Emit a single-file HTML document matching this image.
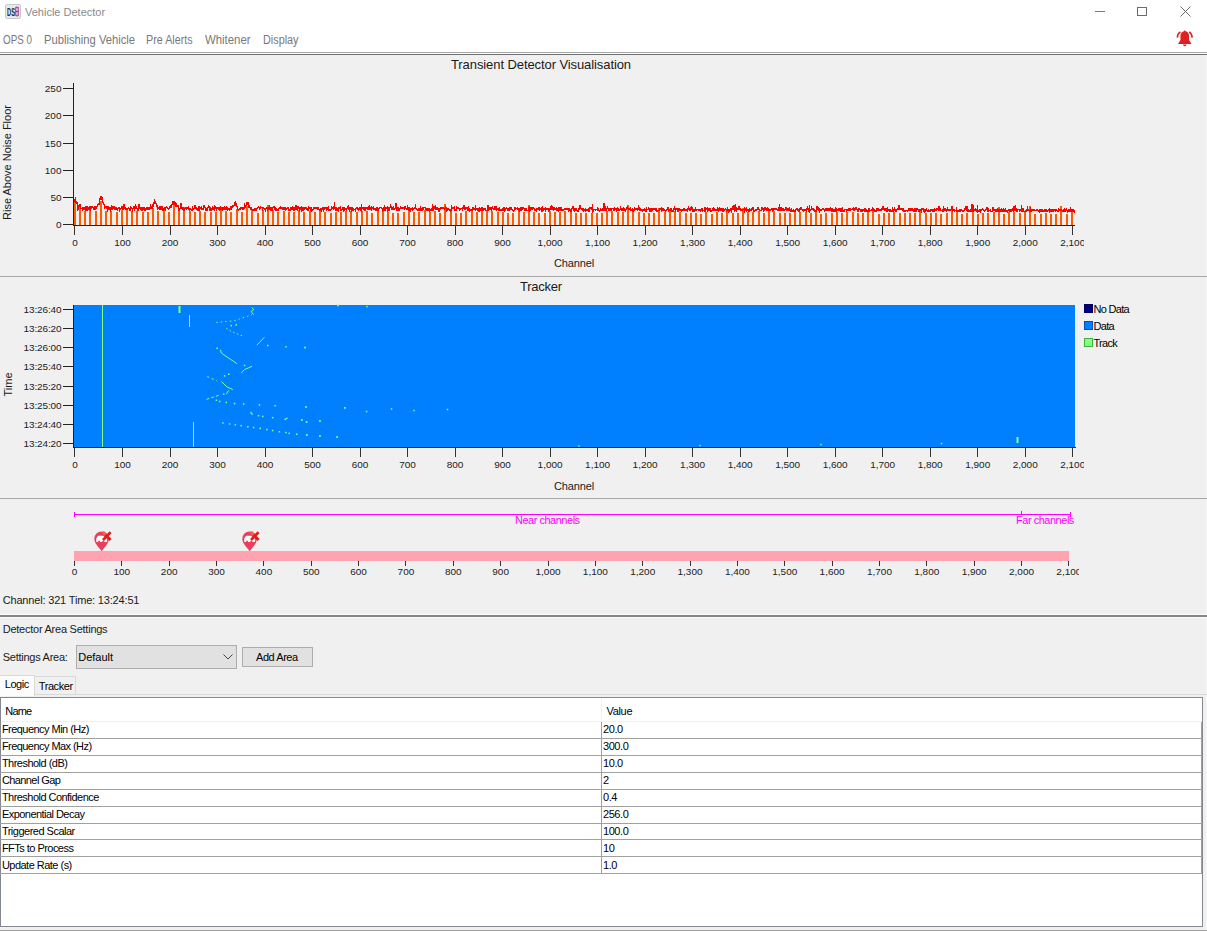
<!DOCTYPE html>
<html><head><meta charset="utf-8"><style>
html,body{margin:0;padding:0;width:1207px;height:931px;overflow:hidden;background:#f0f0f0;}
body{position:relative;font-family:"Liberation Sans",sans-serif;}
.t{position:absolute;white-space:nowrap;font-family:"Liberation Sans",sans-serif;}
</style></head><body>
<div style="position:absolute;left:0px;top:0px;width:1207px;height:55px;background:#fff;"></div>
<svg style="position:absolute;left:5px;top:4px" width="16" height="15" viewBox="0 0 16 15">
<rect x="0.5" y="0.5" width="15" height="14" rx="1.5" fill="#e8e8e8" stroke="#c8c8c8"/>
<text x="2" y="12" font-family="Liberation Sans" font-size="10" font-weight="bold" fill="#1a2a4a" textLength="8" lengthAdjust="spacingAndGlyphs">DS</text>
<path d="M10.8 3.2h2.4v8.6h-2.4zM10.8 7.5h2.4" fill="none" stroke="#a02090" stroke-width="1"/>
</svg>
<div class="t" style="left:25.00px;top:7px;font-size:11px;line-height:11px;color:#8a8a8a;">Vehicle Detector</div>
<div style="position:absolute;left:1095px;top:11px;width:10px;height:1px;background:#7a7a7a;"></div>
<div style="position:absolute;left:1137px;top:7px;width:10px;height:9px;background:transparent;border:1px solid #6a6a6a;box-sizing:border-box;"></div>
<svg style="position:absolute;left:1180px;top:6px" width="11" height="11"><path d="M0.5 0.5L10.5 10.5M10.5 0.5L0.5 10.5" stroke="#6a6a6a" stroke-width="1"/></svg>
<div class="t" style="left:3.10px;top:34px;font-size:12px;line-height:12px;color:#787878;transform:scaleX(0.818);transform-origin:0 0;">OPS 0</div>
<div class="t" style="left:43.70px;top:34px;font-size:12px;line-height:12px;color:#787878;transform:scaleX(0.935);transform-origin:0 0;">Publishing Vehicle</div>
<div class="t" style="left:146.40px;top:34px;font-size:12px;line-height:12px;color:#787878;transform:scaleX(0.896);transform-origin:0 0;">Pre Alerts</div>
<div class="t" style="left:205.40px;top:34px;font-size:12px;line-height:12px;color:#787878;transform:scaleX(0.948);transform-origin:0 0;">Whitener</div>
<div class="t" style="left:263.20px;top:34px;font-size:12px;line-height:12px;color:#787878;transform:scaleX(0.902);transform-origin:0 0;">Display</div>
<svg style="position:absolute;left:1176px;top:30px" width="18" height="18" viewBox="0 0 18 18">
<path d="M8.75 1.3c-2.6 0-4.3 2-4.3 4.8v3.8L2 13.9h13.5L13.05 9.9V6.1c0-2.8-1.7-4.8-4.3-4.8z" fill="#e02020"/>
<rect x="8" y="0.6" width="1.5" height="1.5" fill="#e02020"/>
<path d="M7 14.5a1.75 1.75 0 0 0 3.5 0z" fill="#e02020"/>
<path d="M4.4 1.9A6.5 6.5 0 0 0 1.5 7.6" stroke="#e02020" stroke-width="1.7" fill="none"/>
<path d="M13.1 1.9A6.5 6.5 0 0 1 16 7.6" stroke="#e02020" stroke-width="1.7" fill="none"/>
</svg>
<div style="position:absolute;left:0px;top:52px;width:1207px;height:1px;background:#a8a8a8;"></div>
<div style="position:absolute;left:0px;top:54px;width:1207px;height:1px;background:#707070;"></div>
<div style="position:absolute;left:0px;top:55px;width:1207px;height:876px;background:#f0f0f0;"></div>
<div style="position:absolute;left:1206px;top:55px;width:1px;height:876px;background:#f7f7f7;"></div>
<div class="t" style="left:451.00px;top:58px;font-size:13px;line-height:13px;color:#1a1a1a;letter-spacing:-0.088px;">Transient Detector Visualisation</div>
<div style="position:absolute;left:73px;top:83px;width:1px;height:143px;background:#222;"></div>
<div style="position:absolute;left:63px;top:224px;width:10px;height:1px;background:#222;"></div>
<div class="t" style="left:55.94px;top:221px;font-size:10px;line-height:10px;color:#222;transform:scaleY(0.85);transform-origin:50% 4px;">0</div>
<div style="position:absolute;left:63px;top:197px;width:10px;height:1px;background:#222;"></div>
<div class="t" style="left:50.38px;top:194px;font-size:10px;line-height:10px;color:#222;transform:scaleY(0.85);transform-origin:50% 4px;">50</div>
<div style="position:absolute;left:63px;top:170px;width:10px;height:1px;background:#222;"></div>
<div class="t" style="left:44.82px;top:167px;font-size:10px;line-height:10px;color:#222;transform:scaleY(0.85);transform-origin:50% 4px;">100</div>
<div style="position:absolute;left:63px;top:143px;width:10px;height:1px;background:#222;"></div>
<div class="t" style="left:44.82px;top:140px;font-size:10px;line-height:10px;color:#222;transform:scaleY(0.85);transform-origin:50% 4px;">150</div>
<div style="position:absolute;left:63px;top:115px;width:10px;height:1px;background:#222;"></div>
<div class="t" style="left:44.82px;top:112px;font-size:10px;line-height:10px;color:#222;transform:scaleY(0.85);transform-origin:50% 4px;">200</div>
<div style="position:absolute;left:63px;top:88px;width:10px;height:1px;background:#222;"></div>
<div class="t" style="left:44.82px;top:85px;font-size:10px;line-height:10px;color:#222;transform:scaleY(0.85);transform-origin:50% 4px;">250</div>
<div style="position:absolute;left:73px;top:225px;width:1002px;height:1px;background:#222;"></div>
<div style="position:absolute;left:0;top:0;width:1083.5px;height:931px;overflow:hidden">
<div style="position:absolute;left:74px;top:226px;width:1px;height:9px;background:#333;"></div>
<div class="t" style="left:72.22px;top:239px;font-size:10px;line-height:10px;color:#222;transform:scaleY(0.85);transform-origin:50% 4px;">0</div>
<div style="position:absolute;left:122px;top:226px;width:1px;height:9px;background:#333;"></div>
<div class="t" style="left:114.17px;top:239px;font-size:10px;line-height:10px;color:#222;transform:scaleY(0.85);transform-origin:50% 4px;">100</div>
<div style="position:absolute;left:170px;top:226px;width:1px;height:9px;background:#333;"></div>
<div class="t" style="left:161.68px;top:239px;font-size:10px;line-height:10px;color:#222;transform:scaleY(0.85);transform-origin:50% 4px;">200</div>
<div style="position:absolute;left:217px;top:226px;width:1px;height:9px;background:#333;"></div>
<div class="t" style="left:209.19px;top:239px;font-size:10px;line-height:10px;color:#222;transform:scaleY(0.85);transform-origin:50% 4px;">300</div>
<div style="position:absolute;left:265px;top:226px;width:1px;height:9px;background:#333;"></div>
<div class="t" style="left:256.70px;top:239px;font-size:10px;line-height:10px;color:#222;transform:scaleY(0.85);transform-origin:50% 4px;">400</div>
<div style="position:absolute;left:312px;top:226px;width:1px;height:9px;background:#333;"></div>
<div class="t" style="left:304.21px;top:239px;font-size:10px;line-height:10px;color:#222;transform:scaleY(0.85);transform-origin:50% 4px;">500</div>
<div style="position:absolute;left:360px;top:226px;width:1px;height:9px;background:#333;"></div>
<div class="t" style="left:351.72px;top:239px;font-size:10px;line-height:10px;color:#222;transform:scaleY(0.85);transform-origin:50% 4px;">600</div>
<div style="position:absolute;left:407px;top:226px;width:1px;height:9px;background:#333;"></div>
<div class="t" style="left:399.23px;top:239px;font-size:10px;line-height:10px;color:#222;transform:scaleY(0.85);transform-origin:50% 4px;">700</div>
<div style="position:absolute;left:455px;top:226px;width:1px;height:9px;background:#333;"></div>
<div class="t" style="left:446.74px;top:239px;font-size:10px;line-height:10px;color:#222;transform:scaleY(0.85);transform-origin:50% 4px;">800</div>
<div style="position:absolute;left:502px;top:226px;width:1px;height:9px;background:#333;"></div>
<div class="t" style="left:494.25px;top:239px;font-size:10px;line-height:10px;color:#222;transform:scaleY(0.85);transform-origin:50% 4px;">900</div>
<div style="position:absolute;left:550px;top:226px;width:1px;height:9px;background:#333;"></div>
<div class="t" style="left:537.59px;top:239px;font-size:10px;line-height:10px;color:#222;transform:scaleY(0.85);transform-origin:50% 4px;">1,000</div>
<div style="position:absolute;left:597px;top:226px;width:1px;height:9px;background:#333;"></div>
<div class="t" style="left:585.10px;top:239px;font-size:10px;line-height:10px;color:#222;transform:scaleY(0.85);transform-origin:50% 4px;">1,100</div>
<div style="position:absolute;left:645px;top:226px;width:1px;height:9px;background:#333;"></div>
<div class="t" style="left:632.61px;top:239px;font-size:10px;line-height:10px;color:#222;transform:scaleY(0.85);transform-origin:50% 4px;">1,200</div>
<div style="position:absolute;left:692px;top:226px;width:1px;height:9px;background:#333;"></div>
<div class="t" style="left:680.12px;top:239px;font-size:10px;line-height:10px;color:#222;transform:scaleY(0.85);transform-origin:50% 4px;">1,300</div>
<div style="position:absolute;left:740px;top:226px;width:1px;height:9px;background:#333;"></div>
<div class="t" style="left:727.63px;top:239px;font-size:10px;line-height:10px;color:#222;transform:scaleY(0.85);transform-origin:50% 4px;">1,400</div>
<div style="position:absolute;left:787px;top:226px;width:1px;height:9px;background:#333;"></div>
<div class="t" style="left:775.14px;top:239px;font-size:10px;line-height:10px;color:#222;transform:scaleY(0.85);transform-origin:50% 4px;">1,500</div>
<div style="position:absolute;left:835px;top:226px;width:1px;height:9px;background:#333;"></div>
<div class="t" style="left:822.65px;top:239px;font-size:10px;line-height:10px;color:#222;transform:scaleY(0.85);transform-origin:50% 4px;">1,600</div>
<div style="position:absolute;left:882px;top:226px;width:1px;height:9px;background:#333;"></div>
<div class="t" style="left:870.16px;top:239px;font-size:10px;line-height:10px;color:#222;transform:scaleY(0.85);transform-origin:50% 4px;">1,700</div>
<div style="position:absolute;left:930px;top:226px;width:1px;height:9px;background:#333;"></div>
<div class="t" style="left:917.67px;top:239px;font-size:10px;line-height:10px;color:#222;transform:scaleY(0.85);transform-origin:50% 4px;">1,800</div>
<div style="position:absolute;left:977px;top:226px;width:1px;height:9px;background:#333;"></div>
<div class="t" style="left:965.18px;top:239px;font-size:10px;line-height:10px;color:#222;transform:scaleY(0.85);transform-origin:50% 4px;">1,900</div>
<div style="position:absolute;left:1025px;top:226px;width:1px;height:9px;background:#333;"></div>
<div class="t" style="left:1012.69px;top:239px;font-size:10px;line-height:10px;color:#222;transform:scaleY(0.85);transform-origin:50% 4px;">2,000</div>
<div style="position:absolute;left:1072px;top:226px;width:1px;height:9px;background:#333;"></div>
<div class="t" style="left:1060.20px;top:239px;font-size:10px;line-height:10px;color:#222;transform:scaleY(0.85);transform-origin:50% 4px;">2,100</div>
</div>
<div class="t" style="left:554.00px;top:258px;font-size:11px;line-height:11px;color:#1a1a1a;letter-spacing:-0.139px;">Channel</div>
<div class="t" style="left:-53px;top:156.5px;width:120px;text-align:center;font-size:11px;line-height:11px;color:#1a1a1a;transform:rotate(-90deg);">Rise Above Noise Floor</div>
<svg style="position:absolute;left:0;top:0" width="1207" height="260"><path d="M75 224.5V201 M80 224.5V207 M85 224.5V211 M90 224.5V210 M96 224.5V211 M101 224.5V201 M106 224.5V211 M111 224.5V211 M117 224.5V212 M122 224.5V210 M127 224.5V210 M132 224.5V211 M137 224.5V211 M143 224.5V212 M148 224.5V212 M153 224.5V208 M158 224.5V211 M164 224.5V210 M169 224.5V212 M174 224.5V204 M179 224.5V211 M184 224.5V207 M190 224.5V211 M195 224.5V212 M200 224.5V211 M205 224.5V212 M211 224.5V212 M216 224.5V212 M221 224.5V210 M226 224.5V211 M231 224.5V212 M237 224.5V209 M242 224.5V212 M247 224.5V206 M252 224.5V210 M258 224.5V213 M263 224.5V210 M268 224.5V205 M273 224.5V210 M278 224.5V212 M284 224.5V211 M289 224.5V212 M294 224.5V212 M299 224.5V210 M304 224.5V212 M310 224.5V211 M315 224.5V212 M320 224.5V211 M325 224.5V212 M331 224.5V213 M336 224.5V212 M341 224.5V212 M346 224.5V211 M351 224.5V211 M357 224.5V212 M362 224.5V211 M367 224.5V211 M372 224.5V213 M378 224.5V211 M383 224.5V211 M388 224.5V212 M393 224.5V213 M398 224.5V213 M404 224.5V212 M409 224.5V211 M414 224.5V212 M419 224.5V212 M425 224.5V210 M430 224.5V212 M435 224.5V211 M440 224.5V213 M445 224.5V204 M451 224.5V211 M456 224.5V213 M461 224.5V213 M466 224.5V211 M472 224.5V211 M477 224.5V212 M482 224.5V211 M487 224.5V211 M492 224.5V211 M498 224.5V212 M503 224.5V212 M508 224.5V213 M513 224.5V213 M519 224.5V211 M524 224.5V212 M529 224.5V205 M534 224.5V212 M539 224.5V213 M545 224.5V213 M550 224.5V211 M555 224.5V212 M560 224.5V212 M565 224.5V211 M571 224.5V211 M576 224.5V213 M581 224.5V213 M586 224.5V213 M592 224.5V213 M597 224.5V213 M602 224.5V213 M607 224.5V211 M612 224.5V211 M618 224.5V212 M623 224.5V212 M628 224.5V205 M633 224.5V212 M639 224.5V212 M644 224.5V213 M649 224.5V213 M654 224.5V213 M659 224.5V208 M665 224.5V212 M670 224.5V211 M675 224.5V211 M680 224.5V212 M686 224.5V213 M691 224.5V213 M696 224.5V213 M701 224.5V214 M706 224.5V212 M712 224.5V214 M717 224.5V212 M722 224.5V213 M727 224.5V211 M733 224.5V213 M738 224.5V213 M743 224.5V208 M748 224.5V212 M753 224.5V212 M759 224.5V211 M764 224.5V213 M769 224.5V211 M774 224.5V211 M780 224.5V213 M785 224.5V213 M790 224.5V213 M795 224.5V211 M800 224.5V212 M806 224.5V212 M811 224.5V213 M816 224.5V212 M821 224.5V214 M826 224.5V213 M832 224.5V213 M837 224.5V212 M842 224.5V213 M847 224.5V212 M853 224.5V212 M858 224.5V213 M863 224.5V213 M868 224.5V212 M873 224.5V208 M879 224.5V214 M884 224.5V213 M889 224.5V213 M894 224.5V212 M900 224.5V213 M905 224.5V213 M910 224.5V213 M915 224.5V213 M920 224.5V209 M926 224.5V213 M931 224.5V213 M936 224.5V213 M941 224.5V214 M947 224.5V213 M952 224.5V208 M957 224.5V212 M962 224.5V214 M967 224.5V213 M973 224.5V212 M978 224.5V214 M983 224.5V213 M988 224.5V213 M994 224.5V212 M999 224.5V207 M1004 224.5V214 M1009 224.5V212 M1014 224.5V212 M1020 224.5V213 M1025 224.5V212 M1030 224.5V206 M1035 224.5V214 M1041 224.5V214 M1046 224.5V213 M1051 224.5V214 M1056 224.5V214 M1061 224.5V206 M1067 224.5V214 M1072 224.5V212" stroke="#ff5a00" stroke-width="2" fill="none" shape-rendering="crispEdges"/><polyline points="74.0,201.1 74.5,201.5 75.0,199.3 75.5,198.6 76.0,201.8 76.5,201.6 77.0,203.4 77.5,202.2 78.0,209.2 78.5,208.4 79.0,206.2 79.5,206.5 80.0,203.9 80.5,208.1 81.0,208.4 81.5,208.3 82.0,208.1 82.5,210.3 83.0,209.7 83.5,207.6 84.0,207.5 84.5,209.4 85.0,209.7 85.5,210.2 86.0,206.3 86.5,210.0 87.0,210.2 87.5,206.6 88.0,209.4 88.5,206.7 89.0,210.2 89.5,206.8 90.0,206.7 90.5,209.5 91.0,208.6 91.5,207.1 92.0,206.9 92.5,206.8 93.0,207.2 93.5,210.2 94.0,207.6 94.5,207.2 95.0,209.7 95.5,206.7 96.0,207.0 96.5,209.0 97.0,206.7 97.5,205.2 98.0,204.7 98.5,203.8 99.0,204.4 99.5,201.0 100.0,197.7 100.5,199.4 101.0,196.4 101.5,198.7 102.0,197.8 102.5,202.2 103.0,202.3 103.5,202.5 104.0,204.7 104.5,205.9 105.0,207.9 105.5,206.7 106.0,206.5 106.5,208.5 107.0,208.8 107.5,210.0 108.0,206.5 108.5,208.2 109.0,207.1 109.5,208.7 110.0,207.8 110.5,210.3 111.0,209.1 111.5,204.9 112.0,210.0 112.5,206.3 113.0,208.3 113.5,207.7 114.0,206.7 114.5,209.3 115.0,209.3 115.5,209.5 116.0,207.8 116.5,210.0 117.0,208.1 117.5,209.8 118.0,208.9 118.5,208.7 119.0,206.7 119.5,210.3 120.0,209.3 120.5,209.3 121.0,208.2 121.5,206.8 122.0,206.6 122.5,208.3 123.0,209.2 123.5,208.9 124.0,204.5 124.5,209.1 125.0,207.1 125.5,209.0 126.0,210.0 126.5,209.1 127.0,208.1 127.5,210.0 128.0,208.0 128.5,207.7 129.0,208.4 129.5,209.8 130.0,210.2 130.5,207.1 131.0,207.5 131.5,208.1 132.0,208.4 132.5,209.8 133.0,208.2 133.5,206.6 134.0,206.6 134.5,208.7 135.0,207.2 135.5,203.8 136.0,207.4 136.5,206.7 137.0,208.2 137.5,209.0 138.0,210.2 138.5,207.3 139.0,203.8 139.5,209.3 140.0,207.6 140.5,209.2 141.0,208.9 141.5,208.0 142.0,210.0 142.5,210.1 143.0,207.0 143.5,208.9 144.0,208.0 144.5,209.9 145.0,210.2 145.5,209.0 146.0,209.3 146.5,209.0 147.0,207.3 147.5,210.3 148.0,208.6 148.5,207.8 149.0,209.9 149.5,206.8 150.0,208.7 150.5,203.9 151.0,206.6 151.5,206.9 152.0,208.9 152.5,205.6 153.0,206.8 153.5,205.2 154.0,203.0 154.5,200.3 155.0,201.6 155.5,202.8 156.0,203.1 156.5,204.7 157.0,205.4 157.5,208.6 158.0,209.1 158.5,208.3 159.0,207.2 159.5,208.5 160.0,206.6 160.5,208.5 161.0,209.7 161.5,208.5 162.0,206.8 162.5,208.2 163.0,210.1 163.5,208.4 164.0,208.2 164.5,210.1 165.0,207.8 165.5,209.0 166.0,207.1 166.5,206.6 167.0,207.4 167.5,207.8 168.0,209.0 168.5,209.3 169.0,208.4 169.5,207.1 170.0,207.7 170.5,207.2 171.0,205.5 171.5,206.4 172.0,204.9 172.5,204.1 173.0,201.5 173.5,203.0 174.0,200.8 174.5,203.4 175.0,204.5 175.5,202.2 176.0,205.7 176.5,204.4 177.0,206.6 177.5,206.1 178.0,206.1 178.5,209.0 179.0,210.2 179.5,208.5 180.0,208.5 180.5,207.3 181.0,203.4 181.5,208.6 182.0,207.2 182.5,207.4 183.0,210.4 183.5,207.0 184.0,210.3 184.5,209.6 185.0,208.4 185.5,208.3 186.0,206.7 186.5,209.9 187.0,208.4 187.5,208.2 188.0,207.3 188.5,206.7 189.0,209.7 189.5,209.9 190.0,208.2 190.5,208.6 191.0,209.7 191.5,210.1 192.0,209.6 192.5,208.2 193.0,210.0 193.5,209.6 194.0,208.2 194.5,206.9 195.0,205.4 195.5,209.1 196.0,207.5 196.5,209.2 197.0,209.2 197.5,208.7 198.0,210.5 198.5,209.3 199.0,206.6 199.5,209.5 200.0,208.2 200.5,207.4 201.0,207.0 201.5,210.1 202.0,208.6 202.5,208.8 203.0,209.1 203.5,207.0 204.0,204.8 204.5,207.3 205.0,207.3 205.5,209.0 206.0,210.3 206.5,208.7 207.0,208.1 207.5,209.2 208.0,207.8 208.5,205.1 209.0,206.8 209.5,209.6 210.0,210.1 210.5,206.9 211.0,210.3 211.5,210.2 212.0,208.5 212.5,207.6 213.0,210.3 213.5,208.5 214.0,209.8 214.5,207.1 215.0,208.4 215.5,206.9 216.0,207.2 216.5,209.3 217.0,207.7 217.5,208.3 218.0,208.7 218.5,210.3 219.0,207.6 219.5,210.1 220.0,209.1 220.5,207.7 221.0,208.9 221.5,209.1 222.0,207.4 222.5,210.5 223.0,207.9 223.5,207.8 224.0,209.1 224.5,208.8 225.0,207.1 225.5,208.8 226.0,208.1 226.5,207.5 227.0,209.6 227.5,207.0 228.0,209.8 228.5,209.7 229.0,208.4 229.5,209.8 230.0,209.2 230.5,207.9 231.0,209.5 231.5,208.1 232.0,206.6 232.5,206.0 233.0,207.1 233.5,206.5 234.0,205.8 234.5,202.9 235.0,202.1 235.5,204.8 236.0,203.9 236.5,205.3 237.0,206.3 237.5,208.4 238.0,209.7 238.5,210.0 239.0,209.7 239.5,207.9 240.0,210.3 240.5,207.7 241.0,208.1 241.5,208.2 242.0,207.4 242.5,209.6 243.0,209.6 243.5,206.7 244.0,208.9 244.5,205.0 245.0,206.2 245.5,207.0 246.0,205.6 246.5,204.1 247.0,202.1 247.5,204.8 248.0,202.8 248.5,203.8 249.0,206.6 249.5,205.8 250.0,207.6 250.5,207.6 251.0,210.1 251.5,208.5 252.0,209.4 252.5,210.2 253.0,209.9 253.5,210.0 254.0,210.0 254.5,210.4 255.0,208.8 255.5,209.8 256.0,208.4 256.5,209.6 257.0,208.2 257.5,207.6 258.0,207.9 258.5,207.0 259.0,207.3 259.5,209.8 260.0,207.1 260.5,209.0 261.0,207.0 261.5,207.5 262.0,207.7 262.5,209.1 263.0,207.5 263.5,207.5 264.0,208.0 264.5,209.9 265.0,207.8 265.5,210.3 266.0,208.9 266.5,208.7 267.0,207.0 267.5,209.9 268.0,208.8 268.5,207.9 269.0,209.3 269.5,206.9 270.0,208.2 270.5,209.5 271.0,207.4 271.5,208.1 272.0,210.1 272.5,209.3 273.0,207.9 273.5,207.4 274.0,206.9 274.5,210.0 275.0,207.2 275.5,209.6 276.0,208.7 276.5,210.5 277.0,210.1 277.5,209.8 278.0,210.3 278.5,210.0 279.0,208.9 279.5,207.5 280.0,208.0 280.5,207.2 281.0,208.6 281.5,208.2 282.0,207.3 282.5,208.6 283.0,210.0 283.5,206.9 284.0,209.5 284.5,209.0 285.0,206.9 285.5,209.9 286.0,209.2 286.5,208.3 287.0,208.0 287.5,208.4 288.0,207.9 288.5,209.6 289.0,210.4 289.5,209.6 290.0,210.0 290.5,207.4 291.0,209.4 291.5,207.6 292.0,210.0 292.5,207.2 293.0,207.5 293.5,208.4 294.0,210.4 294.5,208.8 295.0,209.8 295.5,208.4 296.0,205.3 296.5,209.5 297.0,209.9 297.5,206.2 298.0,208.2 298.5,207.3 299.0,208.8 299.5,210.0 300.0,207.5 300.5,210.3 301.0,208.2 301.5,207.5 302.0,210.6 302.5,209.6 303.0,207.7 303.5,209.3 304.0,207.3 304.5,209.1 305.0,208.2 305.5,208.3 306.0,207.4 306.5,207.5 307.0,209.0 307.5,209.0 308.0,210.3 308.5,210.0 309.0,207.4 309.5,208.0 310.0,207.9 310.5,210.0 311.0,209.0 311.5,207.1 312.0,210.6 312.5,209.4 313.0,209.5 313.5,208.4 314.0,207.4 314.5,208.7 315.0,208.4 315.5,207.6 316.0,208.0 316.5,208.2 317.0,207.1 317.5,207.5 318.0,209.2 318.5,208.5 319.0,209.5 319.5,209.8 320.0,210.7 320.5,210.2 321.0,208.6 321.5,210.3 322.0,208.9 322.5,210.3 323.0,207.2 323.5,210.3 324.0,209.2 324.5,208.1 325.0,207.3 325.5,208.7 326.0,208.5 326.5,209.6 327.0,207.9 327.5,208.5 328.0,207.3 328.5,210.6 329.0,210.2 329.5,210.0 330.0,209.8 330.5,210.4 331.0,209.9 331.5,209.0 332.0,207.0 332.5,208.1 333.0,207.3 333.5,210.0 334.0,208.3 334.5,202.5 335.0,208.2 335.5,210.5 336.0,208.8 336.5,208.1 337.0,210.3 337.5,210.1 338.0,208.8 338.5,210.3 339.0,207.8 339.5,207.7 340.0,207.2 340.5,209.7 341.0,210.4 341.5,209.7 342.0,209.6 342.5,208.7 343.0,207.9 343.5,209.7 344.0,207.7 344.5,209.5 345.0,208.4 345.5,210.3 346.0,207.9 346.5,210.5 347.0,208.1 347.5,207.4 348.0,208.7 348.5,205.2 349.0,208.1 349.5,210.0 350.0,208.1 350.5,208.0 351.0,209.1 351.5,210.4 352.0,207.2 352.5,209.8 353.0,210.5 353.5,207.7 354.0,209.4 354.5,209.5 355.0,209.0 355.5,210.2 356.0,209.0 356.5,207.7 357.0,207.7 357.5,208.0 358.0,209.9 358.5,210.0 359.0,208.9 359.5,209.2 360.0,207.2 360.5,209.7 361.0,210.3 361.5,204.2 362.0,208.7 362.5,208.1 363.0,207.4 363.5,209.2 364.0,210.0 364.5,207.6 365.0,207.3 365.5,209.4 366.0,208.1 366.5,207.4 367.0,207.7 367.5,207.7 368.0,210.2 368.5,207.3 369.0,208.5 369.5,207.2 370.0,209.9 370.5,207.7 371.0,207.1 371.5,210.4 372.0,208.6 372.5,208.7 373.0,207.3 373.5,209.9 374.0,208.0 374.5,209.1 375.0,208.8 375.5,208.5 376.0,210.7 376.5,207.3 377.0,209.5 377.5,208.4 378.0,210.3 378.5,210.4 379.0,208.6 379.5,208.5 380.0,207.9 380.5,207.8 381.0,207.8 381.5,207.9 382.0,208.3 382.5,210.8 383.0,210.3 383.5,208.6 384.0,209.7 384.5,205.6 385.0,208.1 385.5,210.5 386.0,208.1 386.5,207.7 387.0,208.5 387.5,209.8 388.0,207.3 388.5,208.6 389.0,210.4 389.5,210.0 390.0,207.4 390.5,205.6 391.0,206.4 391.5,208.7 392.0,207.7 392.5,208.1 393.0,209.6 393.5,207.9 394.0,209.8 394.5,208.6 395.0,208.0 395.5,208.4 396.0,203.5 396.5,209.2 397.0,210.7 397.5,209.6 398.0,208.0 398.5,209.6 399.0,210.3 399.5,209.5 400.0,208.8 400.5,207.4 401.0,208.4 401.5,208.2 402.0,208.7 402.5,207.8 403.0,208.1 403.5,208.5 404.0,207.8 404.5,209.8 405.0,206.6 405.5,208.5 406.0,208.7 406.5,209.0 407.0,208.9 407.5,205.1 408.0,210.4 408.5,208.2 409.0,207.9 409.5,209.5 410.0,208.5 410.5,210.6 411.0,209.5 411.5,208.7 412.0,208.2 412.5,210.4 413.0,208.1 413.5,209.1 414.0,208.5 414.5,207.8 415.0,208.1 415.5,204.5 416.0,208.7 416.5,209.0 417.0,209.2 417.5,209.3 418.0,210.7 418.5,208.5 419.0,208.4 419.5,209.8 420.0,210.7 420.5,207.8 421.0,209.0 421.5,208.6 422.0,210.0 422.5,208.1 423.0,208.4 423.5,209.1 424.0,207.5 424.5,207.6 425.0,207.7 425.5,210.0 426.0,207.9 426.5,210.4 427.0,208.2 427.5,210.1 428.0,209.9 428.5,209.9 429.0,208.5 429.5,210.3 430.0,209.3 430.5,209.8 431.0,210.3 431.5,207.7 432.0,209.7 432.5,204.2 433.0,210.7 433.5,207.8 434.0,208.8 434.5,208.7 435.0,206.7 435.5,204.9 436.0,209.9 436.5,207.7 437.0,207.4 437.5,209.0 438.0,208.4 438.5,210.3 439.0,208.7 439.5,210.0 440.0,208.7 440.5,209.3 441.0,207.8 441.5,207.7 442.0,208.2 442.5,207.8 443.0,207.4 443.5,207.8 444.0,208.3 444.5,209.1 445.0,208.3 445.5,207.6 446.0,208.4 446.5,208.0 447.0,210.9 447.5,210.4 448.0,208.8 448.5,208.8 449.0,209.3 449.5,209.6 450.0,210.7 450.5,210.9 451.0,210.3 451.5,205.5 452.0,207.8 452.5,208.6 453.0,208.5 453.5,207.4 454.0,207.2 454.5,210.2 455.0,210.0 455.5,210.2 456.0,210.1 456.5,207.7 457.0,208.8 457.5,208.3 458.0,207.5 458.5,208.2 459.0,208.7 459.5,210.2 460.0,209.6 460.5,208.4 461.0,208.5 461.5,208.6 462.0,208.1 462.5,209.3 463.0,208.0 463.5,207.9 464.0,205.4 464.5,208.8 465.0,209.3 465.5,208.1 466.0,208.5 466.5,207.8 467.0,208.9 467.5,208.2 468.0,209.9 468.5,208.4 469.0,210.7 469.5,208.1 470.0,210.9 470.5,209.6 471.0,209.7 471.5,209.6 472.0,210.4 472.5,209.2 473.0,207.8 473.5,209.8 474.0,209.8 474.5,208.8 475.0,209.5 475.5,205.4 476.0,209.0 476.5,209.5 477.0,208.0 477.5,210.9 478.0,208.5 478.5,210.9 479.0,210.5 479.5,210.9 480.0,208.3 480.5,209.7 481.0,210.4 481.5,209.2 482.0,207.7 482.5,209.9 483.0,210.3 483.5,209.3 484.0,208.1 484.5,209.7 485.0,209.4 485.5,209.2 486.0,210.3 486.5,210.2 487.0,210.6 487.5,208.0 488.0,204.8 488.5,210.5 489.0,207.9 489.5,208.8 490.0,209.6 490.5,207.7 491.0,208.2 491.5,210.5 492.0,208.2 492.5,206.0 493.0,208.6 493.5,208.4 494.0,209.9 494.5,207.9 495.0,209.1 495.5,207.9 496.0,209.6 496.5,208.2 497.0,209.9 497.5,208.7 498.0,208.9 498.5,209.7 499.0,210.4 499.5,209.1 500.0,210.8 500.5,209.9 501.0,209.5 501.5,210.5 502.0,210.5 502.5,209.1 503.0,208.9 503.5,209.6 504.0,207.7 504.5,208.5 505.0,210.8 505.5,209.9 506.0,208.4 506.5,208.0 507.0,208.4 507.5,208.7 508.0,210.5 508.5,209.4 509.0,210.6 509.5,208.8 510.0,210.0 510.5,208.7 511.0,206.9 511.5,209.2 512.0,209.1 512.5,209.9 513.0,210.9 513.5,211.0 514.0,210.4 514.5,210.0 515.0,207.8 515.5,208.9 516.0,208.3 516.5,208.3 517.0,208.0 517.5,210.1 518.0,208.1 518.5,209.7 519.0,208.4 519.5,210.1 520.0,208.0 520.5,207.6 521.0,210.8 521.5,207.6 522.0,209.4 522.5,207.9 523.0,208.6 523.5,208.0 524.0,208.0 524.5,209.3 525.0,210.3 525.5,209.0 526.0,208.3 526.5,209.5 527.0,210.5 527.5,210.5 528.0,210.9 528.5,209.0 529.0,210.6 529.5,206.5 530.0,210.4 530.5,210.0 531.0,207.1 531.5,208.6 532.0,209.8 532.5,207.7 533.0,207.9 533.5,208.0 534.0,208.7 534.5,209.8 535.0,210.9 535.5,209.3 536.0,209.0 536.5,210.1 537.0,208.9 537.5,209.2 538.0,209.1 538.5,207.8 539.0,207.8 539.5,209.5 540.0,208.4 540.5,208.9 541.0,209.3 541.5,210.2 542.0,207.6 542.5,207.2 543.0,210.9 543.5,209.7 544.0,208.6 544.5,209.6 545.0,209.3 545.5,210.2 546.0,207.9 546.5,208.5 547.0,209.1 547.5,209.0 548.0,210.0 548.5,211.0 549.0,208.8 549.5,210.4 550.0,209.8 550.5,206.4 551.0,209.5 551.5,205.0 552.0,210.2 552.5,207.7 553.0,209.1 553.5,211.0 554.0,207.9 554.5,209.2 555.0,208.9 555.5,209.1 556.0,208.7 556.5,207.9 557.0,210.5 557.5,209.5 558.0,208.1 558.5,210.9 559.0,210.8 559.5,209.1 560.0,210.5 560.5,210.6 561.0,207.8 561.5,209.0 562.0,210.8 562.5,210.0 563.0,210.3 563.5,210.2 564.0,209.7 564.5,208.9 565.0,208.9 565.5,209.4 566.0,209.6 566.5,208.9 567.0,209.3 567.5,208.8 568.0,208.5 568.5,210.2 569.0,208.6 569.5,210.5 570.0,210.1 570.5,209.8 571.0,211.0 571.5,209.2 572.0,208.5 572.5,208.0 573.0,206.5 573.5,209.6 574.0,208.8 574.5,210.9 575.0,210.4 575.5,210.4 576.0,208.4 576.5,209.8 577.0,210.3 577.5,210.8 578.0,210.1 578.5,210.9 579.0,208.7 579.5,210.2 580.0,204.9 580.5,208.6 581.0,208.6 581.5,209.4 582.0,208.7 582.5,209.4 583.0,208.3 583.5,210.6 584.0,209.6 584.5,209.5 585.0,210.8 585.5,208.6 586.0,210.9 586.5,210.4 587.0,209.3 587.5,210.2 588.0,209.4 588.5,208.9 589.0,211.0 589.5,210.9 590.0,208.0 590.5,208.1 591.0,208.2 591.5,208.8 592.0,208.0 592.5,204.3 593.0,211.1 593.5,210.6 594.0,209.5 594.5,209.5 595.0,209.5 595.5,209.4 596.0,210.1 596.5,209.4 597.0,209.4 597.5,211.0 598.0,208.2 598.5,208.9 599.0,210.9 599.5,211.0 600.0,210.7 600.5,207.8 601.0,209.8 601.5,209.8 602.0,210.9 602.5,209.5 603.0,207.9 603.5,210.7 604.0,203.4 604.5,210.1 605.0,209.7 605.5,208.3 606.0,210.5 606.5,210.6 607.0,208.9 607.5,207.8 608.0,208.7 608.5,209.6 609.0,210.1 609.5,208.6 610.0,208.4 610.5,208.7 611.0,210.4 611.5,208.6 612.0,208.7 612.5,208.7 613.0,208.4 613.5,208.8 614.0,210.2 614.5,210.5 615.0,208.1 615.5,208.6 616.0,209.2 616.5,209.1 617.0,210.9 617.5,209.1 618.0,210.5 618.5,209.0 619.0,209.1 619.5,209.8 620.0,209.4 620.5,207.9 621.0,209.1 621.5,210.9 622.0,208.5 622.5,211.0 623.0,209.0 623.5,208.3 624.0,211.0 624.5,208.3 625.0,210.8 625.5,211.0 626.0,209.1 626.5,208.8 627.0,208.1 627.5,206.1 628.0,208.5 628.5,209.6 629.0,209.7 629.5,209.6 630.0,208.1 630.5,208.1 631.0,210.4 631.5,209.5 632.0,209.0 632.5,208.8 633.0,211.1 633.5,209.9 634.0,209.4 634.5,211.0 635.0,208.0 635.5,209.2 636.0,208.4 636.5,210.3 637.0,207.9 637.5,210.5 638.0,210.0 638.5,205.6 639.0,208.0 639.5,209.9 640.0,209.5 640.5,208.9 641.0,210.8 641.5,209.3 642.0,209.4 642.5,210.9 643.0,211.0 643.5,210.8 644.0,209.6 644.5,208.9 645.0,210.3 645.5,209.8 646.0,211.0 646.5,208.2 647.0,209.1 647.5,209.6 648.0,209.6 648.5,207.9 649.0,208.8 649.5,210.0 650.0,208.2 650.5,209.5 651.0,211.1 651.5,209.4 652.0,210.6 652.5,210.7 653.0,208.8 653.5,209.6 654.0,209.8 654.5,209.5 655.0,208.9 655.5,209.6 656.0,208.6 656.5,210.7 657.0,211.2 657.5,210.2 658.0,210.3 658.5,210.6 659.0,210.6 659.5,208.7 660.0,208.0 660.5,209.1 661.0,210.0 661.5,211.0 662.0,208.2 662.5,208.3 663.0,210.8 663.5,208.6 664.0,210.4 664.5,210.0 665.0,210.3 665.5,210.8 666.0,210.5 666.5,209.8 667.0,210.1 667.5,209.2 668.0,208.0 668.5,210.6 669.0,210.1 669.5,210.2 670.0,209.0 670.5,208.6 671.0,210.2 671.5,209.1 672.0,211.0 672.5,211.1 673.0,211.1 673.5,209.1 674.0,209.7 674.5,208.1 675.0,209.7 675.5,210.4 676.0,208.6 676.5,208.8 677.0,208.2 677.5,209.2 678.0,211.1 678.5,209.3 679.0,208.8 679.5,211.1 680.0,209.4 680.5,210.5 681.0,210.1 681.5,211.0 682.0,209.8 682.5,209.7 683.0,210.5 683.5,208.5 684.0,208.9 684.5,210.4 685.0,210.5 685.5,210.3 686.0,209.4 686.5,209.6 687.0,210.9 687.5,208.2 688.0,210.3 688.5,208.4 689.0,209.9 689.5,209.3 690.0,210.2 690.5,208.2 691.0,208.4 691.5,207.4 692.0,209.3 692.5,208.4 693.0,210.8 693.5,209.9 694.0,211.2 694.5,209.0 695.0,210.9 695.5,209.4 696.0,210.9 696.5,210.6 697.0,209.5 697.5,209.5 698.0,209.1 698.5,209.4 699.0,210.6 699.5,209.6 700.0,209.5 700.5,211.0 701.0,210.6 701.5,210.2 702.0,209.0 702.5,211.1 703.0,210.2 703.5,210.2 704.0,210.6 704.5,211.2 705.0,207.1 705.5,210.6 706.0,210.1 706.5,209.4 707.0,208.7 707.5,208.3 708.0,210.7 708.5,209.3 709.0,210.4 709.5,210.5 710.0,208.9 710.5,209.9 711.0,211.3 711.5,210.6 712.0,210.4 712.5,209.0 713.0,209.8 713.5,208.6 714.0,211.0 714.5,209.0 715.0,209.5 715.5,210.1 716.0,209.8 716.5,209.9 717.0,209.2 717.5,208.3 718.0,210.3 718.5,210.8 719.0,209.0 719.5,206.7 720.0,210.2 720.5,209.1 721.0,211.1 721.5,208.7 722.0,208.4 722.5,210.5 723.0,209.7 723.5,208.2 724.0,210.9 724.5,210.4 725.0,209.2 725.5,208.8 726.0,209.1 726.5,210.7 727.0,210.1 727.5,208.8 728.0,210.1 728.5,211.2 729.0,209.5 729.5,210.8 730.0,210.3 730.5,209.3 731.0,208.8 731.5,210.9 732.0,209.3 732.5,206.4 733.0,208.3 733.5,209.9 734.0,205.4 734.5,211.3 735.0,210.9 735.5,204.4 736.0,208.7 736.5,210.3 737.0,209.2 737.5,209.1 738.0,209.3 738.5,209.0 739.0,206.1 739.5,210.1 740.0,208.5 740.5,209.7 741.0,209.2 741.5,210.6 742.0,210.3 742.5,209.8 743.0,209.4 743.5,209.7 744.0,209.9 744.5,211.0 745.0,208.2 745.5,208.3 746.0,210.2 746.5,208.8 747.0,210.9 747.5,210.4 748.0,209.6 748.5,210.0 749.0,211.4 749.5,210.9 750.0,209.0 750.5,209.9 751.0,209.2 751.5,209.8 752.0,208.4 752.5,208.2 753.0,209.4 753.5,208.6 754.0,211.2 754.5,210.6 755.0,210.1 755.5,209.7 756.0,210.4 756.5,209.6 757.0,209.3 757.5,207.6 758.0,210.3 758.5,208.4 759.0,209.3 759.5,210.0 760.0,210.2 760.5,210.8 761.0,210.6 761.5,208.3 762.0,208.7 762.5,208.3 763.0,209.7 763.5,209.2 764.0,210.9 764.5,210.2 765.0,207.5 765.5,209.4 766.0,209.0 766.5,208.8 767.0,211.3 767.5,209.1 768.0,210.4 768.5,208.8 769.0,209.2 769.5,210.5 770.0,210.4 770.5,209.5 771.0,209.8 771.5,209.8 772.0,207.8 772.5,211.4 773.0,209.3 773.5,210.1 774.0,208.8 774.5,209.8 775.0,210.0 775.5,208.9 776.0,208.5 776.5,208.4 777.0,209.7 777.5,210.2 778.0,210.7 778.5,208.4 779.0,208.7 779.5,203.8 780.0,209.5 780.5,208.4 781.0,210.2 781.5,208.4 782.0,209.2 782.5,208.6 783.0,210.3 783.5,208.8 784.0,209.5 784.5,210.1 785.0,209.5 785.5,208.4 786.0,208.9 786.5,208.3 787.0,210.1 787.5,210.0 788.0,208.7 788.5,210.5 789.0,210.5 789.5,208.4 790.0,209.2 790.5,210.8 791.0,211.2 791.5,209.5 792.0,210.7 792.5,211.4 793.0,211.0 793.5,210.2 794.0,211.1 794.5,211.1 795.0,210.9 795.5,211.3 796.0,209.6 796.5,208.7 797.0,208.5 797.5,209.2 798.0,210.2 798.5,209.7 799.0,211.4 799.5,209.5 800.0,208.9 800.5,209.0 801.0,207.4 801.5,208.3 802.0,209.2 802.5,210.3 803.0,210.6 803.5,209.8 804.0,211.0 804.5,209.7 805.0,209.6 805.5,210.7 806.0,210.5 806.5,210.8 807.0,209.0 807.5,205.6 808.0,208.9 808.5,210.1 809.0,211.4 809.5,205.3 810.0,210.9 810.5,210.1 811.0,209.5 811.5,207.7 812.0,208.5 812.5,208.6 813.0,208.8 813.5,210.9 814.0,208.7 814.5,210.6 815.0,210.1 815.5,211.1 816.0,211.4 816.5,210.8 817.0,206.4 817.5,209.2 818.0,210.0 818.5,208.6 819.0,210.3 819.5,211.5 820.0,209.3 820.5,210.0 821.0,209.6 821.5,209.9 822.0,209.9 822.5,208.3 823.0,208.6 823.5,208.9 824.0,209.7 824.5,210.8 825.0,209.3 825.5,211.2 826.0,208.4 826.5,209.9 827.0,208.8 827.5,210.7 828.0,210.5 828.5,209.8 829.0,208.6 829.5,209.5 830.0,210.8 830.5,208.5 831.0,209.9 831.5,210.9 832.0,208.6 832.5,209.9 833.0,211.3 833.5,210.4 834.0,211.3 834.5,210.3 835.0,210.7 835.5,207.4 836.0,208.9 836.5,211.4 837.0,209.2 837.5,209.4 838.0,210.7 838.5,209.5 839.0,210.6 839.5,209.9 840.0,208.7 840.5,211.0 841.0,210.4 841.5,209.6 842.0,211.4 842.5,208.8 843.0,210.3 843.5,210.8 844.0,211.2 844.5,209.7 845.0,209.6 845.5,209.6 846.0,209.5 846.5,211.1 847.0,210.5 847.5,209.6 848.0,209.2 848.5,208.8 849.0,211.3 849.5,209.6 850.0,208.9 850.5,211.2 851.0,209.3 851.5,209.2 852.0,209.6 852.5,209.1 853.0,209.8 853.5,206.8 854.0,210.9 854.5,209.1 855.0,208.7 855.5,207.0 856.0,210.3 856.5,208.6 857.0,209.6 857.5,209.6 858.0,211.1 858.5,208.9 859.0,208.8 859.5,208.8 860.0,209.8 860.5,211.5 861.0,211.2 861.5,210.8 862.0,209.9 862.5,210.6 863.0,210.1 863.5,210.1 864.0,210.6 864.5,210.9 865.0,208.8 865.5,208.7 866.0,211.4 866.5,209.9 867.0,210.2 867.5,210.9 868.0,211.1 868.5,208.5 869.0,208.8 869.5,208.7 870.0,210.9 870.5,210.6 871.0,210.1 871.5,209.9 872.0,210.6 872.5,209.0 873.0,210.2 873.5,208.5 874.0,211.1 874.5,209.0 875.0,211.5 875.5,210.8 876.0,211.4 876.5,208.9 877.0,209.2 877.5,211.3 878.0,208.9 878.5,209.3 879.0,210.7 879.5,209.9 880.0,210.0 880.5,209.9 881.0,210.7 881.5,210.3 882.0,208.7 882.5,207.4 883.0,209.9 883.5,208.2 884.0,209.7 884.5,209.0 885.0,211.1 885.5,209.1 886.0,208.6 886.5,209.3 887.0,211.0 887.5,209.1 888.0,210.9 888.5,209.5 889.0,209.7 889.5,211.0 890.0,211.0 890.5,210.4 891.0,211.4 891.5,211.6 892.0,211.0 892.5,209.5 893.0,211.1 893.5,209.2 894.0,211.2 894.5,208.7 895.0,209.5 895.5,211.4 896.0,211.1 896.5,209.3 897.0,209.6 897.5,208.8 898.0,209.8 898.5,209.8 899.0,205.5 899.5,209.6 900.0,209.7 900.5,208.8 901.0,209.5 901.5,208.7 902.0,208.7 902.5,209.7 903.0,207.9 903.5,211.0 904.0,210.1 904.5,210.9 905.0,211.0 905.5,211.3 906.0,210.7 906.5,210.2 907.0,210.2 907.5,211.2 908.0,210.9 908.5,210.4 909.0,208.8 909.5,209.8 910.0,209.1 910.5,209.1 911.0,210.1 911.5,209.6 912.0,208.7 912.5,210.8 913.0,211.0 913.5,208.9 914.0,210.8 914.5,211.4 915.0,208.8 915.5,209.7 916.0,211.3 916.5,209.0 917.0,209.5 917.5,209.0 918.0,209.9 918.5,210.0 919.0,211.5 919.5,211.4 920.0,209.3 920.5,210.0 921.0,210.5 921.5,211.6 922.0,208.7 922.5,209.3 923.0,208.5 923.5,209.4 924.0,211.4 924.5,209.0 925.0,211.6 925.5,210.1 926.0,211.0 926.5,209.5 927.0,210.7 927.5,210.6 928.0,211.6 928.5,209.4 929.0,211.5 929.5,211.2 930.0,211.1 930.5,208.9 931.0,211.2 931.5,208.8 932.0,210.9 932.5,211.4 933.0,210.0 933.5,210.7 934.0,209.8 934.5,208.9 935.0,210.9 935.5,210.1 936.0,210.0 936.5,210.3 937.0,208.7 937.5,209.4 938.0,209.4 938.5,210.8 939.0,206.1 939.5,210.5 940.0,210.5 940.5,209.7 941.0,210.7 941.5,210.7 942.0,210.7 942.5,211.1 943.0,211.1 943.5,206.2 944.0,210.6 944.5,210.5 945.0,208.8 945.5,210.6 946.0,210.5 946.5,211.0 947.0,210.1 947.5,206.9 948.0,209.8 948.5,209.9 949.0,210.8 949.5,209.7 950.0,209.1 950.5,210.0 951.0,209.8 951.5,209.3 952.0,206.5 952.5,211.4 953.0,210.2 953.5,209.5 954.0,209.0 954.5,209.6 955.0,211.0 955.5,210.5 956.0,210.9 956.5,209.2 957.0,211.2 957.5,211.1 958.0,210.4 958.5,210.6 959.0,211.6 959.5,209.6 960.0,209.9 960.5,210.7 961.0,209.4 961.5,210.6 962.0,210.7 962.5,211.7 963.0,211.5 963.5,211.2 964.0,210.5 964.5,209.1 965.0,209.2 965.5,206.0 966.0,209.0 966.5,211.2 967.0,206.0 967.5,208.9 968.0,211.5 968.5,209.1 969.0,210.9 969.5,211.1 970.0,210.0 970.5,209.6 971.0,211.4 971.5,211.1 972.0,204.5 972.5,211.0 973.0,210.5 973.5,205.5 974.0,210.6 974.5,209.7 975.0,209.5 975.5,208.9 976.0,210.0 976.5,211.6 977.0,211.2 977.5,205.3 978.0,211.4 978.5,210.9 979.0,210.8 979.5,211.0 980.0,209.3 980.5,211.5 981.0,210.4 981.5,209.9 982.0,209.0 982.5,209.0 983.0,209.9 983.5,209.9 984.0,210.1 984.5,210.8 985.0,210.4 985.5,210.1 986.0,209.6 986.5,209.6 987.0,207.5 987.5,210.4 988.0,211.6 988.5,209.5 989.0,210.3 989.5,210.5 990.0,210.9 990.5,209.0 991.0,211.6 991.5,211.4 992.0,211.7 992.5,211.0 993.0,207.1 993.5,209.1 994.0,210.6 994.5,209.2 995.0,209.3 995.5,210.6 996.0,211.2 996.5,209.3 997.0,209.3 997.5,209.0 998.0,210.9 998.5,210.3 999.0,211.3 999.5,211.2 1000.0,209.9 1000.5,211.1 1001.0,211.7 1001.5,210.1 1002.0,211.7 1002.5,211.4 1003.0,209.7 1003.5,209.1 1004.0,211.6 1004.5,209.3 1005.0,209.1 1005.5,209.1 1006.0,211.3 1006.5,211.4 1007.0,210.2 1007.5,211.2 1008.0,210.1 1008.5,210.2 1009.0,209.3 1009.5,210.1 1010.0,211.3 1010.5,211.4 1011.0,209.4 1011.5,211.3 1012.0,210.8 1012.5,209.1 1013.0,210.2 1013.5,211.6 1014.0,206.0 1014.5,210.1 1015.0,209.5 1015.5,204.6 1016.0,211.4 1016.5,209.0 1017.0,209.6 1017.5,211.6 1018.0,209.7 1018.5,209.8 1019.0,209.7 1019.5,210.9 1020.0,209.9 1020.5,210.6 1021.0,210.8 1021.5,205.4 1022.0,209.6 1022.5,211.2 1023.0,211.1 1023.5,210.0 1024.0,211.3 1024.5,211.8 1025.0,211.6 1025.5,210.6 1026.0,210.0 1026.5,209.7 1027.0,211.4 1027.5,206.5 1028.0,210.2 1028.5,210.5 1029.0,210.7 1029.5,210.9 1030.0,210.6 1030.5,209.3 1031.0,211.5 1031.5,209.8 1032.0,210.5 1032.5,209.5 1033.0,209.2 1033.5,209.8 1034.0,209.5 1034.5,210.5 1035.0,210.8 1035.5,210.8 1036.0,210.7 1036.5,210.3 1037.0,209.6 1037.5,210.7 1038.0,210.7 1038.5,211.2 1039.0,210.1 1039.5,211.1 1040.0,209.5 1040.5,211.8 1041.0,211.8 1041.5,210.1 1042.0,209.1 1042.5,211.0 1043.0,211.2 1043.5,211.1 1044.0,210.8 1044.5,210.9 1045.0,209.3 1045.5,211.0 1046.0,211.8 1046.5,209.5 1047.0,210.0 1047.5,211.5 1048.0,211.0 1048.5,210.5 1049.0,209.3 1049.5,209.0 1050.0,211.6 1050.5,210.8 1051.0,209.5 1051.5,210.3 1052.0,209.4 1052.5,210.4 1053.0,211.3 1053.5,210.0 1054.0,210.7 1054.5,210.6 1055.0,209.2 1055.5,210.4 1056.0,209.5 1056.5,210.3 1057.0,210.7 1057.5,210.8 1058.0,211.3 1058.5,209.7 1059.0,210.6 1059.5,209.8 1060.0,210.3 1060.5,209.8 1061.0,209.8 1061.5,210.3 1062.0,210.7 1062.5,210.6 1063.0,211.7 1063.5,209.3 1064.0,209.1 1064.5,211.4 1065.0,209.2 1065.5,210.5 1066.0,209.1 1066.5,209.1 1067.0,210.0 1067.5,211.8 1068.0,211.5 1068.5,211.6 1069.0,209.8 1069.5,210.4 1070.0,211.7 1070.5,209.6 1071.0,211.3 1071.5,210.7 1072.0,209.8 1072.5,210.5 1073.0,209.7 1073.5,210.7 1074.0,211.9 1074.5,211.9 1075.0,210.5" stroke="#ff0000" stroke-width="1.3" fill="none" stroke-linejoin="miter" shape-rendering="crispEdges"/></svg>
<div style="position:absolute;left:0px;top:276px;width:1207px;height:1px;background:#a8a8a8;"></div>
<div class="t" style="left:520.10px;top:280px;font-size:13px;line-height:13px;color:#1a1a1a;letter-spacing:-0.254px;">Tracker</div>
<div style="position:absolute;left:74px;top:305px;width:1001px;height:142px;background:#0080ff;"></div>
<div style="position:absolute;left:73px;top:305px;width:1px;height:143px;background:#222;"></div>
<div style="position:absolute;left:73px;top:447px;width:1003px;height:1px;background:#222;"></div>
<div style="position:absolute;left:63px;top:309px;width:10px;height:1px;background:#222;"></div>
<div class="t" style="left:23.50px;top:306px;font-size:10px;line-height:10px;color:#222;letter-spacing:-0.116px;transform:scaleY(0.85);transform-origin:50% 4px;">13:26:40</div>
<div style="position:absolute;left:63px;top:328px;width:10px;height:1px;background:#222;"></div>
<div class="t" style="left:23.50px;top:325px;font-size:10px;line-height:10px;color:#222;letter-spacing:-0.116px;transform:scaleY(0.85);transform-origin:50% 4px;">13:26:20</div>
<div style="position:absolute;left:63px;top:347px;width:10px;height:1px;background:#222;"></div>
<div class="t" style="left:23.50px;top:344px;font-size:10px;line-height:10px;color:#222;letter-spacing:-0.116px;transform:scaleY(0.85);transform-origin:50% 4px;">13:26:00</div>
<div style="position:absolute;left:63px;top:366px;width:10px;height:1px;background:#222;"></div>
<div class="t" style="left:23.50px;top:363px;font-size:10px;line-height:10px;color:#222;letter-spacing:-0.116px;transform:scaleY(0.85);transform-origin:50% 4px;">13:25:40</div>
<div style="position:absolute;left:63px;top:386px;width:10px;height:1px;background:#222;"></div>
<div class="t" style="left:23.50px;top:383px;font-size:10px;line-height:10px;color:#222;letter-spacing:-0.116px;transform:scaleY(0.85);transform-origin:50% 4px;">13:25:20</div>
<div style="position:absolute;left:63px;top:405px;width:10px;height:1px;background:#222;"></div>
<div class="t" style="left:23.50px;top:402px;font-size:10px;line-height:10px;color:#222;letter-spacing:-0.116px;transform:scaleY(0.85);transform-origin:50% 4px;">13:25:00</div>
<div style="position:absolute;left:63px;top:424px;width:10px;height:1px;background:#222;"></div>
<div class="t" style="left:23.50px;top:421px;font-size:10px;line-height:10px;color:#222;letter-spacing:-0.116px;transform:scaleY(0.85);transform-origin:50% 4px;">13:24:40</div>
<div style="position:absolute;left:63px;top:443px;width:10px;height:1px;background:#222;"></div>
<div class="t" style="left:23.50px;top:440px;font-size:10px;line-height:10px;color:#222;letter-spacing:-0.116px;transform:scaleY(0.85);transform-origin:50% 4px;">13:24:20</div>
<div style="position:absolute;left:0;top:0;width:1083.5px;height:931px;overflow:hidden">
<div style="position:absolute;left:74px;top:448px;width:1px;height:9px;background:#333;"></div>
<div class="t" style="left:72.22px;top:461px;font-size:10px;line-height:10px;color:#222;transform:scaleY(0.85);transform-origin:50% 4px;">0</div>
<div style="position:absolute;left:122px;top:448px;width:1px;height:9px;background:#333;"></div>
<div class="t" style="left:114.17px;top:461px;font-size:10px;line-height:10px;color:#222;transform:scaleY(0.85);transform-origin:50% 4px;">100</div>
<div style="position:absolute;left:170px;top:448px;width:1px;height:9px;background:#333;"></div>
<div class="t" style="left:161.68px;top:461px;font-size:10px;line-height:10px;color:#222;transform:scaleY(0.85);transform-origin:50% 4px;">200</div>
<div style="position:absolute;left:217px;top:448px;width:1px;height:9px;background:#333;"></div>
<div class="t" style="left:209.19px;top:461px;font-size:10px;line-height:10px;color:#222;transform:scaleY(0.85);transform-origin:50% 4px;">300</div>
<div style="position:absolute;left:265px;top:448px;width:1px;height:9px;background:#333;"></div>
<div class="t" style="left:256.70px;top:461px;font-size:10px;line-height:10px;color:#222;transform:scaleY(0.85);transform-origin:50% 4px;">400</div>
<div style="position:absolute;left:312px;top:448px;width:1px;height:9px;background:#333;"></div>
<div class="t" style="left:304.21px;top:461px;font-size:10px;line-height:10px;color:#222;transform:scaleY(0.85);transform-origin:50% 4px;">500</div>
<div style="position:absolute;left:360px;top:448px;width:1px;height:9px;background:#333;"></div>
<div class="t" style="left:351.72px;top:461px;font-size:10px;line-height:10px;color:#222;transform:scaleY(0.85);transform-origin:50% 4px;">600</div>
<div style="position:absolute;left:407px;top:448px;width:1px;height:9px;background:#333;"></div>
<div class="t" style="left:399.23px;top:461px;font-size:10px;line-height:10px;color:#222;transform:scaleY(0.85);transform-origin:50% 4px;">700</div>
<div style="position:absolute;left:455px;top:448px;width:1px;height:9px;background:#333;"></div>
<div class="t" style="left:446.74px;top:461px;font-size:10px;line-height:10px;color:#222;transform:scaleY(0.85);transform-origin:50% 4px;">800</div>
<div style="position:absolute;left:502px;top:448px;width:1px;height:9px;background:#333;"></div>
<div class="t" style="left:494.25px;top:461px;font-size:10px;line-height:10px;color:#222;transform:scaleY(0.85);transform-origin:50% 4px;">900</div>
<div style="position:absolute;left:550px;top:448px;width:1px;height:9px;background:#333;"></div>
<div class="t" style="left:537.59px;top:461px;font-size:10px;line-height:10px;color:#222;transform:scaleY(0.85);transform-origin:50% 4px;">1,000</div>
<div style="position:absolute;left:597px;top:448px;width:1px;height:9px;background:#333;"></div>
<div class="t" style="left:585.10px;top:461px;font-size:10px;line-height:10px;color:#222;transform:scaleY(0.85);transform-origin:50% 4px;">1,100</div>
<div style="position:absolute;left:645px;top:448px;width:1px;height:9px;background:#333;"></div>
<div class="t" style="left:632.61px;top:461px;font-size:10px;line-height:10px;color:#222;transform:scaleY(0.85);transform-origin:50% 4px;">1,200</div>
<div style="position:absolute;left:692px;top:448px;width:1px;height:9px;background:#333;"></div>
<div class="t" style="left:680.12px;top:461px;font-size:10px;line-height:10px;color:#222;transform:scaleY(0.85);transform-origin:50% 4px;">1,300</div>
<div style="position:absolute;left:740px;top:448px;width:1px;height:9px;background:#333;"></div>
<div class="t" style="left:727.63px;top:461px;font-size:10px;line-height:10px;color:#222;transform:scaleY(0.85);transform-origin:50% 4px;">1,400</div>
<div style="position:absolute;left:787px;top:448px;width:1px;height:9px;background:#333;"></div>
<div class="t" style="left:775.14px;top:461px;font-size:10px;line-height:10px;color:#222;transform:scaleY(0.85);transform-origin:50% 4px;">1,500</div>
<div style="position:absolute;left:835px;top:448px;width:1px;height:9px;background:#333;"></div>
<div class="t" style="left:822.65px;top:461px;font-size:10px;line-height:10px;color:#222;transform:scaleY(0.85);transform-origin:50% 4px;">1,600</div>
<div style="position:absolute;left:882px;top:448px;width:1px;height:9px;background:#333;"></div>
<div class="t" style="left:870.16px;top:461px;font-size:10px;line-height:10px;color:#222;transform:scaleY(0.85);transform-origin:50% 4px;">1,700</div>
<div style="position:absolute;left:930px;top:448px;width:1px;height:9px;background:#333;"></div>
<div class="t" style="left:917.67px;top:461px;font-size:10px;line-height:10px;color:#222;transform:scaleY(0.85);transform-origin:50% 4px;">1,800</div>
<div style="position:absolute;left:977px;top:448px;width:1px;height:9px;background:#333;"></div>
<div class="t" style="left:965.18px;top:461px;font-size:10px;line-height:10px;color:#222;transform:scaleY(0.85);transform-origin:50% 4px;">1,900</div>
<div style="position:absolute;left:1025px;top:448px;width:1px;height:9px;background:#333;"></div>
<div class="t" style="left:1012.69px;top:461px;font-size:10px;line-height:10px;color:#222;transform:scaleY(0.85);transform-origin:50% 4px;">2,000</div>
<div style="position:absolute;left:1072px;top:448px;width:1px;height:9px;background:#333;"></div>
<div class="t" style="left:1060.20px;top:461px;font-size:10px;line-height:10px;color:#222;transform:scaleY(0.85);transform-origin:50% 4px;">2,100</div>
</div>
<div class="t" style="left:554.00px;top:481px;font-size:11px;line-height:11px;color:#1a1a1a;letter-spacing:-0.139px;">Channel</div>
<div class="t" style="left:-22.5px;top:378.7px;width:60px;text-align:center;font-size:11px;line-height:11px;color:#1a1a1a;transform:rotate(-90deg);">Time</div>
<div style="position:absolute;left:1084px;top:304px;width:9px;height:9px;background:#000080;box-sizing:border-box;border:1px solid #000060;"></div>
<div class="t" style="left:1093.50px;top:304px;font-size:11px;line-height:11px;color:#000;letter-spacing:-0.708px;">No Data</div>
<div style="position:absolute;left:1084px;top:321px;width:9px;height:9px;background:#0080ff;box-sizing:border-box;border:1px solid #0050c0;"></div>
<div class="t" style="left:1093.50px;top:321px;font-size:11px;line-height:11px;color:#000;letter-spacing:-0.684px;">Data</div>
<div style="position:absolute;left:1084px;top:338px;width:9px;height:9px;background:#80ff80;box-sizing:border-box;border:1px solid #40b040;"></div>
<div class="t" style="left:1093.50px;top:338px;font-size:11px;line-height:11px;color:#000;letter-spacing:-0.718px;">Track</div>
<svg style="position:absolute;left:0;top:0" width="1207" height="460"><g fill="none" stroke="#80ff80" stroke-width="1"><path d="M102.5 305V447"/><path d="M179.5 306V313" stroke-width="2"/><path d="M189.5 315V327"/><path d="M193.5 422V447"/><path d="M1017.5 437V443" stroke-width="2"/><path d="M256.9 345.1 L264.4 337.3"/><path d="M220.5 349.7 L221.3 353.0 L237.1 363.8"/><path d="M241.2 372.9 L244.5 369.6 L252.0 366.3"/><path d="M221.3 381.5 L227.1 387.0 L232.9 389.5"/><path d="M228.8 390.3 L226.3 394.1"/><path d="M206.4 399.4 L218.8 395.3" stroke-dasharray="3 2"/><path d="M216.3 322.4 L234.6 320.7 L252.0 314.6" stroke-dasharray="1.5 3"/><path d="M226.3 328.2 L231.3 331.5 L243.7 336.5" stroke-dasharray="1.5 2.5"/><path d="M207.2 376.6 L217.2 380.9" stroke-dasharray="2 3"/><path d="M252.0 307.5 L253.6 309.9 L251.1 311.6 L253.6 314.6"/></g><g fill="#80ff80"><rect x="230.5" y="324.9" width="1.5" height="1.5"/><rect x="235.5" y="324.1" width="1.5" height="1.5"/><rect x="267.0" y="344.8" width="1.5" height="1.5"/><rect x="285.2" y="346.0" width="1.5" height="1.5"/><rect x="304.2" y="346.8" width="1.5" height="1.5"/><rect x="216.4" y="347.6" width="1.5" height="1.5"/><rect x="243.8" y="364.7" width="1.5" height="1.5"/><rect x="223.9" y="375.1" width="1.5" height="1.5"/><rect x="228.0" y="373.5" width="1.5" height="1.5"/><rect x="223.0" y="393.4" width="1.5" height="1.5"/><rect x="215.6" y="399.5" width="1.5" height="1.5"/><rect x="218.9" y="400.7" width="1.5" height="1.5"/><rect x="225.5" y="401.7" width="1.5" height="1.5"/><rect x="233.8" y="402.8" width="1.5" height="1.5"/><rect x="242.9" y="403.3" width="1.5" height="1.5"/><rect x="258.7" y="404.1" width="1.5" height="1.5"/><rect x="274.4" y="405.0" width="1.5" height="1.5"/><rect x="305.1" y="406.1" width="1.5" height="1.5"/><rect x="344.0" y="407.0" width="1.5" height="1.5"/><rect x="250.4" y="411.9" width="1.5" height="1.5"/><rect x="251.2" y="413.3" width="1.5" height="1.5"/><rect x="257.8" y="414.9" width="1.5" height="1.5"/><rect x="262.0" y="415.7" width="1.5" height="1.5"/><rect x="271.9" y="416.9" width="1.5" height="1.5"/><rect x="284.4" y="418.6" width="1.5" height="1.5"/><rect x="286.0" y="417.7" width="1.5" height="1.5"/><rect x="300.9" y="419.4" width="1.5" height="1.5"/><rect x="305.9" y="421.0" width="1.5" height="1.5"/><rect x="319.2" y="420.2" width="1.5" height="1.5"/><rect x="222.2" y="422.2" width="1.5" height="1.5"/><rect x="228.8" y="423.2" width="1.5" height="1.5"/><rect x="234.6" y="423.9" width="1.5" height="1.5"/><rect x="240.4" y="424.9" width="1.5" height="1.5"/><rect x="247.1" y="426.0" width="1.5" height="1.5"/><rect x="252.9" y="426.8" width="1.5" height="1.5"/><rect x="259.5" y="427.7" width="1.5" height="1.5"/><rect x="266.1" y="428.8" width="1.5" height="1.5"/><rect x="271.9" y="429.8" width="1.5" height="1.5"/><rect x="278.6" y="431.0" width="1.5" height="1.5"/><rect x="285.2" y="431.8" width="1.5" height="1.5"/><rect x="288.5" y="432.6" width="1.5" height="1.5"/><rect x="296.0" y="433.5" width="1.5" height="1.5"/><rect x="305.9" y="434.3" width="1.5" height="1.5"/><rect x="319.2" y="435.1" width="1.5" height="1.5"/><rect x="336.5" y="436.3" width="1.5" height="1.5"/><rect x="337.4" y="304.6" width="1.5" height="1.5"/><rect x="337.2" y="304.8" width="1.5" height="1.5"/><rect x="366.2" y="305.8" width="1.5" height="1.5"/><rect x="304.2" y="346.8" width="1.5" height="1.5"/><rect x="305.2" y="406.2" width="1.5" height="1.5"/><rect x="344.2" y="407.2" width="1.5" height="1.5"/><rect x="365.8" y="410.8" width="1.5" height="1.5"/><rect x="390.8" y="408.2" width="1.5" height="1.5"/><rect x="413.2" y="409.8" width="1.5" height="1.5"/><rect x="446.8" y="408.8" width="1.5" height="1.5"/><rect x="301.2" y="419.2" width="1.5" height="1.5"/><rect x="305.8" y="421.2" width="1.5" height="1.5"/><rect x="319.2" y="420.2" width="1.5" height="1.5"/><rect x="306.2" y="434.2" width="1.5" height="1.5"/><rect x="319.2" y="435.2" width="1.5" height="1.5"/><rect x="336.2" y="436.2" width="1.5" height="1.5"/><rect x="578.2" y="445.2" width="1.5" height="1.5"/><rect x="699.2" y="444.8" width="1.5" height="1.5"/><rect x="820.2" y="443.8" width="1.5" height="1.5"/><rect x="940.8" y="442.8" width="1.5" height="1.5"/></g></svg>
<div style="position:absolute;left:0px;top:498px;width:1207px;height:1px;background:#a8a8a8;"></div>
<div style="position:absolute;left:74px;top:514px;width:997px;height:1px;background:#ff00ff;"></div>
<div style="position:absolute;left:74px;top:512px;width:1px;height:5px;background:#ff00ff;"></div>
<div style="position:absolute;left:1070px;top:512px;width:1px;height:5px;background:#ff00ff;"></div>
<div style="position:absolute;left:1021px;top:511px;width:1px;height:3px;background:#ff00ff;"></div>
<div class="t" style="left:515.00px;top:515px;font-size:11px;line-height:11px;color:#ff00ff;letter-spacing:-0.487px;">Near channels</div>
<div class="t" style="left:1016.00px;top:515px;font-size:11px;line-height:11px;color:#ff00ff;letter-spacing:-0.474px;">Far channels</div>
<div style="position:absolute;left:74px;top:551px;width:995px;height:10px;background:#ffa3b1;"></div>
<svg style="position:absolute;left:90px;top:528px" width="24" height="24" viewBox="0 0 24 24">
<path d="M11.7 23.2C9 19.5 4.3 15.5 4.3 10.75A7.3 7.3 0 0 1 18.9 10.75C18.9 15.5 14.4 19.5 11.7 23.2Z" fill="#e8405a"/>
<path d="M6.3 10.2L8.2 7.8H13.3L15.2 10.2H17.1V13.9H14.3V12.8H12.3V13.9H10V12.8H8.2V13.9H6.3Z" fill="#fff"/>
<path d="M13 4.2l7.6 7.8M20.6 4.2l-7.6 7.8" stroke="#e41c1c" stroke-width="2.7"/>
<path d="M13 4.2l2.5 2.6" stroke="#f06a50" stroke-width="2.7"/>
</svg>
<svg style="position:absolute;left:238px;top:528px" width="24" height="24" viewBox="0 0 24 24">
<path d="M11.7 23.2C9 19.5 4.3 15.5 4.3 10.75A7.3 7.3 0 0 1 18.9 10.75C18.9 15.5 14.4 19.5 11.7 23.2Z" fill="#e8405a"/>
<path d="M6.3 10.2L8.2 7.8H13.3L15.2 10.2H17.1V13.9H14.3V12.8H12.3V13.9H10V12.8H8.2V13.9H6.3Z" fill="#fff"/>
<path d="M13 4.2l7.6 7.8M20.6 4.2l-7.6 7.8" stroke="#e41c1c" stroke-width="2.7"/>
<path d="M13 4.2l2.5 2.6" stroke="#f06a50" stroke-width="2.7"/>
</svg>
<div style="position:absolute;left:0;top:0;width:1079px;height:931px;overflow:hidden">
<div style="position:absolute;left:74px;top:561px;width:1px;height:5px;background:#333;"></div>
<div class="t" style="left:71.72px;top:568px;font-size:10px;line-height:10px;color:#222;transform:scaleY(0.85);transform-origin:50% 4px;">0</div>
<div style="position:absolute;left:121px;top:561px;width:1px;height:5px;background:#333;"></div>
<div class="t" style="left:113.51px;top:568px;font-size:10px;line-height:10px;color:#222;transform:scaleY(0.85);transform-origin:50% 4px;">100</div>
<div style="position:absolute;left:169px;top:561px;width:1px;height:5px;background:#333;"></div>
<div class="t" style="left:160.86px;top:568px;font-size:10px;line-height:10px;color:#222;transform:scaleY(0.85);transform-origin:50% 4px;">200</div>
<div style="position:absolute;left:216px;top:561px;width:1px;height:5px;background:#333;"></div>
<div class="t" style="left:208.21px;top:568px;font-size:10px;line-height:10px;color:#222;transform:scaleY(0.85);transform-origin:50% 4px;">300</div>
<div style="position:absolute;left:263px;top:561px;width:1px;height:5px;background:#333;"></div>
<div class="t" style="left:255.56px;top:568px;font-size:10px;line-height:10px;color:#222;transform:scaleY(0.85);transform-origin:50% 4px;">400</div>
<div style="position:absolute;left:311px;top:561px;width:1px;height:5px;background:#333;"></div>
<div class="t" style="left:302.91px;top:568px;font-size:10px;line-height:10px;color:#222;transform:scaleY(0.85);transform-origin:50% 4px;">500</div>
<div style="position:absolute;left:358px;top:561px;width:1px;height:5px;background:#333;"></div>
<div class="t" style="left:350.26px;top:568px;font-size:10px;line-height:10px;color:#222;transform:scaleY(0.85);transform-origin:50% 4px;">600</div>
<div style="position:absolute;left:405px;top:561px;width:1px;height:5px;background:#333;"></div>
<div class="t" style="left:397.61px;top:568px;font-size:10px;line-height:10px;color:#222;transform:scaleY(0.85);transform-origin:50% 4px;">700</div>
<div style="position:absolute;left:453px;top:561px;width:1px;height:5px;background:#333;"></div>
<div class="t" style="left:444.96px;top:568px;font-size:10px;line-height:10px;color:#222;transform:scaleY(0.85);transform-origin:50% 4px;">800</div>
<div style="position:absolute;left:500px;top:561px;width:1px;height:5px;background:#333;"></div>
<div class="t" style="left:492.31px;top:568px;font-size:10px;line-height:10px;color:#222;transform:scaleY(0.85);transform-origin:50% 4px;">900</div>
<div style="position:absolute;left:548px;top:561px;width:1px;height:5px;background:#333;"></div>
<div class="t" style="left:535.49px;top:568px;font-size:10px;line-height:10px;color:#222;transform:scaleY(0.85);transform-origin:50% 4px;">1,000</div>
<div style="position:absolute;left:595px;top:561px;width:1px;height:5px;background:#333;"></div>
<div class="t" style="left:582.84px;top:568px;font-size:10px;line-height:10px;color:#222;transform:scaleY(0.85);transform-origin:50% 4px;">1,100</div>
<div style="position:absolute;left:642px;top:561px;width:1px;height:5px;background:#333;"></div>
<div class="t" style="left:630.19px;top:568px;font-size:10px;line-height:10px;color:#222;transform:scaleY(0.85);transform-origin:50% 4px;">1,200</div>
<div style="position:absolute;left:690px;top:561px;width:1px;height:5px;background:#333;"></div>
<div class="t" style="left:677.54px;top:568px;font-size:10px;line-height:10px;color:#222;transform:scaleY(0.85);transform-origin:50% 4px;">1,300</div>
<div style="position:absolute;left:737px;top:561px;width:1px;height:5px;background:#333;"></div>
<div class="t" style="left:724.89px;top:568px;font-size:10px;line-height:10px;color:#222;transform:scaleY(0.85);transform-origin:50% 4px;">1,400</div>
<div style="position:absolute;left:784px;top:561px;width:1px;height:5px;background:#333;"></div>
<div class="t" style="left:772.24px;top:568px;font-size:10px;line-height:10px;color:#222;transform:scaleY(0.85);transform-origin:50% 4px;">1,500</div>
<div style="position:absolute;left:832px;top:561px;width:1px;height:5px;background:#333;"></div>
<div class="t" style="left:819.59px;top:568px;font-size:10px;line-height:10px;color:#222;transform:scaleY(0.85);transform-origin:50% 4px;">1,600</div>
<div style="position:absolute;left:879px;top:561px;width:1px;height:5px;background:#333;"></div>
<div class="t" style="left:866.94px;top:568px;font-size:10px;line-height:10px;color:#222;transform:scaleY(0.85);transform-origin:50% 4px;">1,700</div>
<div style="position:absolute;left:926px;top:561px;width:1px;height:5px;background:#333;"></div>
<div class="t" style="left:914.29px;top:568px;font-size:10px;line-height:10px;color:#222;transform:scaleY(0.85);transform-origin:50% 4px;">1,800</div>
<div style="position:absolute;left:974px;top:561px;width:1px;height:5px;background:#333;"></div>
<div class="t" style="left:961.64px;top:568px;font-size:10px;line-height:10px;color:#222;transform:scaleY(0.85);transform-origin:50% 4px;">1,900</div>
<div style="position:absolute;left:1021px;top:561px;width:1px;height:5px;background:#333;"></div>
<div class="t" style="left:1008.99px;top:568px;font-size:10px;line-height:10px;color:#222;transform:scaleY(0.85);transform-origin:50% 4px;">2,000</div>
<div style="position:absolute;left:1068px;top:561px;width:1px;height:5px;background:#333;"></div>
<div class="t" style="left:1056.34px;top:568px;font-size:10px;line-height:10px;color:#222;transform:scaleY(0.85);transform-origin:50% 4px;">2,100</div>
</div>
<div class="t" style="left:2.70px;top:595px;font-size:11px;line-height:11px;color:#1a1a1a;letter-spacing:-0.173px;">Channel: 321 Time: 13:24:51</div>
<div style="position:absolute;left:0px;top:614px;width:1207px;height:1px;background:#ffffff;"></div>
<div style="position:absolute;left:0px;top:615px;width:1207px;height:2px;background:#858585;"></div>
<div style="position:absolute;left:0px;top:617px;width:1207px;height:1px;background:#fafafa;"></div>
<div class="t" style="left:2.70px;top:624px;font-size:11px;line-height:11px;color:#1a1a1a;letter-spacing:-0.244px;">Detector Area Settings</div>
<div class="t" style="left:2.70px;top:652px;font-size:11px;line-height:11px;color:#1a1a1a;letter-spacing:-0.256px;">Settings Area:</div>
<div style="position:absolute;left:76px;top:645px;width:161px;height:24px;background:#e1e1e1;box-sizing:border-box;border:1px solid #adadad;"></div>
<div class="t" style="left:78.30px;top:652px;font-size:11px;line-height:11px;color:#000;letter-spacing:-0.036px;">Default</div>
<svg style="position:absolute;left:223px;top:654px" width="10" height="6"><path d="M0.5 0.5L5 5L9.5 0.5" stroke="#444" stroke-width="1" fill="none"/></svg>
<div style="position:absolute;left:242px;top:647px;width:71px;height:20px;background:#e1e1e1;box-sizing:border-box;border:1px solid #adadad;"></div>
<div class="t" style="left:256.00px;top:652px;font-size:11px;line-height:11px;color:#000;letter-spacing:-0.445px;">Add Area</div>
<div style="position:absolute;left:0px;top:694px;width:1207px;height:1px;background:#d9d9d9;"></div>
<div style="position:absolute;left:34px;top:676px;width:42px;height:18px;background:#f0f0f0;box-sizing:border-box;border:1px solid #d9d9d9;border-bottom:none;"></div>
<div style="position:absolute;left:0px;top:675px;width:35px;height:21px;background:#fcfcfc;box-sizing:border-box;border:1px solid #d9d9d9;border-bottom:none;border-left:none;"></div>
<div class="t" style="left:4.80px;top:679px;font-size:11px;line-height:11px;color:#000;letter-spacing:-0.479px;">Logic</div>
<div class="t" style="left:38.80px;top:681px;font-size:11px;line-height:11px;color:#000;letter-spacing:-0.425px;">Tracker</div>
<div style="position:absolute;left:0px;top:697px;width:1203px;height:230px;background:#ffffff;box-sizing:border-box;border:1px solid #828790;"></div>
<div style="position:absolute;left:1px;top:721px;width:1201px;height:1px;background:#f0f0f0;"></div>
<div class="t" style="left:5.30px;top:706px;font-size:11px;line-height:11px;color:#000;letter-spacing:-0.861px;">Name</div>
<div class="t" style="left:606.40px;top:706px;font-size:11px;line-height:11px;color:#000;letter-spacing:-0.283px;">Value</div>
<div style="position:absolute;left:601px;top:698px;width:1px;height:23px;background:#f3f3f3;"></div>
<div class="t" style="left:1.90px;top:724px;font-size:11px;line-height:11px;color:#000;letter-spacing:-0.537px;">Frequency Min (Hz)</div>
<div class="t" style="left:603.00px;top:724px;font-size:11px;line-height:11px;color:#000;letter-spacing:-0.428px;">20.0</div>
<div style="position:absolute;left:0px;top:738px;width:1202px;height:1px;background:#a0a0a0;"></div>
<div class="t" style="left:1.90px;top:741px;font-size:11px;line-height:11px;color:#000;letter-spacing:-0.554px;">Frequency Max (Hz)</div>
<div class="t" style="left:603.00px;top:741px;font-size:11px;line-height:11px;color:#000;letter-spacing:-0.440px;">300.0</div>
<div style="position:absolute;left:0px;top:755px;width:1202px;height:1px;background:#a0a0a0;"></div>
<div class="t" style="left:1.90px;top:758px;font-size:11px;line-height:11px;color:#000;letter-spacing:-0.520px;">Threshold (dB)</div>
<div class="t" style="left:603.00px;top:758px;font-size:11px;line-height:11px;color:#000;letter-spacing:-0.428px;">10.0</div>
<div style="position:absolute;left:0px;top:772px;width:1202px;height:1px;background:#a0a0a0;"></div>
<div class="t" style="left:1.90px;top:775px;font-size:11px;line-height:11px;color:#000;letter-spacing:-0.589px;">Channel Gap</div>
<div class="t" style="left:603.00px;top:775px;font-size:11px;line-height:11px;color:#000;letter-spacing:-0.489px;">2</div>
<div style="position:absolute;left:0px;top:789px;width:1202px;height:1px;background:#a0a0a0;"></div>
<div class="t" style="left:1.90px;top:792px;font-size:11px;line-height:11px;color:#000;letter-spacing:-0.538px;">Threshold Confidence</div>
<div class="t" style="left:603.00px;top:792px;font-size:11px;line-height:11px;color:#000;letter-spacing:-0.408px;">0.4</div>
<div style="position:absolute;left:0px;top:806px;width:1202px;height:1px;background:#a0a0a0;"></div>
<div class="t" style="left:1.90px;top:809px;font-size:11px;line-height:11px;color:#000;letter-spacing:-0.540px;">Exponential Decay</div>
<div class="t" style="left:603.00px;top:809px;font-size:11px;line-height:11px;color:#000;letter-spacing:-0.440px;">256.0</div>
<div style="position:absolute;left:0px;top:823px;width:1202px;height:1px;background:#a0a0a0;"></div>
<div class="t" style="left:1.90px;top:826px;font-size:11px;line-height:11px;color:#000;letter-spacing:-0.506px;">Triggered Scalar</div>
<div class="t" style="left:603.00px;top:826px;font-size:11px;line-height:11px;color:#000;letter-spacing:-0.440px;">100.0</div>
<div style="position:absolute;left:0px;top:839px;width:1202px;height:1px;background:#a0a0a0;"></div>
<div class="t" style="left:1.90px;top:843px;font-size:11px;line-height:11px;color:#000;letter-spacing:-0.530px;">FFTs to Process</div>
<div class="t" style="left:603.00px;top:843px;font-size:11px;line-height:11px;color:#000;letter-spacing:-0.489px;">10</div>
<div style="position:absolute;left:0px;top:856px;width:1202px;height:1px;background:#a0a0a0;"></div>
<div class="t" style="left:1.90px;top:860px;font-size:11px;line-height:11px;color:#000;letter-spacing:-0.518px;">Update Rate (s)</div>
<div class="t" style="left:603.00px;top:860px;font-size:11px;line-height:11px;color:#000;letter-spacing:-0.408px;">1.0</div>
<div style="position:absolute;left:0px;top:873px;width:1202px;height:1px;background:#a0a0a0;"></div>
<div style="position:absolute;left:601px;top:722px;width:1px;height:151px;background:#a0a0a0;"></div>
<div style="position:absolute;left:1201px;top:722px;width:1px;height:151px;background:#a0a0a0;"></div>
<div style="position:absolute;left:0px;top:930px;width:1207px;height:1px;background:#a0a0a0;"></div>
</body></html>
